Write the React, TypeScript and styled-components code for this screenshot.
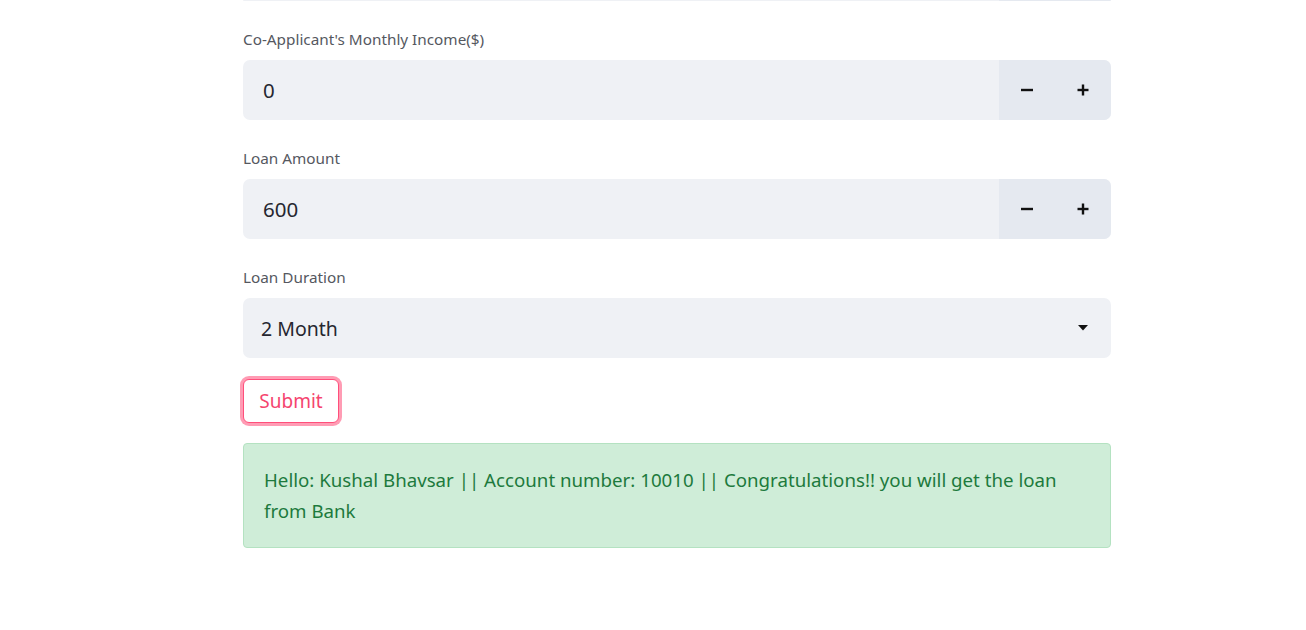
import React from "react";
import styled, { createGlobalStyle } from "styled-components";

const Global = createGlobalStyle`
  html, body { margin: 0; padding: 0; background: #ffffff; }
  body { font-family: "Noto Sans", "Open Sans", sans-serif; color: #262730; }
  * { box-sizing: border-box; }
`;

const Page = styled.div`
  width: 1306px;
  height: 630px;
  overflow: hidden;
  padding-left: 243px;
`;

const Column = styled.div`
  width: 868px;
  display: flex;
  flex-direction: column;
  gap: 16px;
`;

const Stub = styled.div`
  height: 1px;
  display: flex;
  border-radius: 0 0 6px 6px;
  overflow: hidden;
`;

const StubMain = styled.div`
  flex: 1;
  background: #eff1f5;
`;

const StubSide = styled.div`
  width: 112px;
  background: #e5e9f0;
`;

const Field = styled.div`
  display: flex;
  flex-direction: column;
`;

const Label = styled.div`
  height: 43px;
  display: flex;
  align-items: center;
  padding-top: 1px;
  font-size: 15.3px;
  color: #55585f;
`;

const InputRow = styled.div`
  height: 60px;
  display: flex;
  border-radius: 7px;
  overflow: hidden;
  background: #eff1f5;
`;

const Value = styled.div<{ $pad: number; $size: number }>`
  flex: 1;
  display: flex;
  align-items: center;
  padding-left: ${(p) => p.$pad}px;
  font-size: ${(p) => p.$size}px;
  color: #262730;
`;

const StepButton = styled.div`
  width: 56px;
  display: flex;
  align-items: center;
  justify-content: center;
  background: #e5e9f0;
`;

const Caret = styled.div`
  width: 56px;
  display: flex;
  align-items: center;
  justify-content: center;
`;

const SubmitButton = styled.button`
  align-self: flex-start;
  margin-top: 5px;
  width: 96px;
  height: 44px;
  border: 1px solid #ff4f7b;
  border-radius: 6px;
  background: #ffffff;
  box-shadow: 0 0 0 3px rgba(255, 90, 130, 0.6);
  color: #f5456f;
  font-family: "Noto Sans", "Open Sans", sans-serif;
  font-size: 19px;
  padding: 0;
  cursor: pointer;
`;

const Alert = styled.div`
  margin-top: 4px;
  border: 1px solid #b4e2c1;
  border-radius: 4px;
  background: #cfedd8;
  color: #1d7a3d;
  padding: 20px 20px 21px 20px;
  font-size: 18.7px;
  line-height: 31px;
`;

const Minus = () => (
  <svg width="12" height="12" viewBox="0 0 12 12">
    <rect x="0" y="4.8" width="12" height="2.4" fill="#111" />
  </svg>
);

const Plus = () => (
  <svg width="12" height="12" viewBox="0 0 12 12">
    <rect x="0.5" y="4.8" width="11" height="2.4" fill="#111" />
    <rect x="4.8" y="0.5" width="2.4" height="11" fill="#111" />
  </svg>
);

const Down = () => (
  <svg width="10" height="6" viewBox="0 0 10 6">
    <path d="M0 0 L10 0 L5 5.5 Z" fill="#111" />
  </svg>
);

const NumberField = ({ label, value }: { label: string; value: string }) => (
  <Field>
    <Label>{label}</Label>
    <InputRow>
      <Value $pad={20} $size={20.5}>
        {value}
      </Value>
      <StepButton>
        <Minus />
      </StepButton>
      <StepButton>
        <Plus />
      </StepButton>
    </InputRow>
  </Field>
);

export default function App() {
  return (
    <Page>
      <Global />
      <Column>
        <Stub>
          <StubMain />
          <StubSide />
        </Stub>
        <NumberField label="Co-Applicant's Monthly Income($)" value="0" />
        <NumberField label="Loan Amount" value="600" />
        <Field>
          <Label>Loan Duration</Label>
          <InputRow>
            <Value $pad={18} $size={19.5}>
              2 Month
            </Value>
            <Caret>
              <Down />
            </Caret>
          </InputRow>
        </Field>
        <SubmitButton>Submit</SubmitButton>
        <Alert>
          Hello: Kushal Bhavsar || Account number: 10010 || Congratulations!! you will get the loan from Bank
        </Alert>
      </Column>
    </Page>
  );
}
